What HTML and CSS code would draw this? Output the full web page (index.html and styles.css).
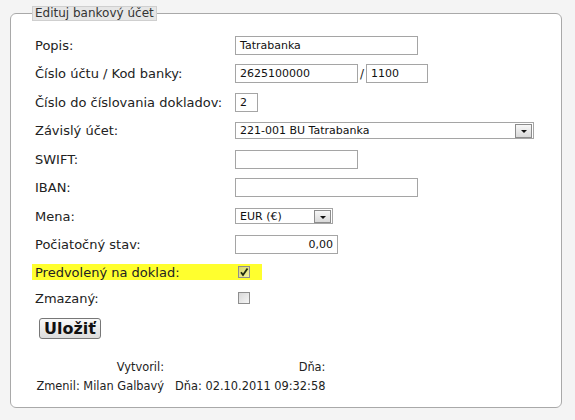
FILE: index.html
```html
<!DOCTYPE html>
<html lang="sk">
<head>
  <meta charset="UTF-8" />
  <title>Edituj bankový účet</title>
  <link rel="stylesheet" href="styles.css">
</head>
<body>

  <fieldset class="box">
    <legend>Edituj bankový účet</legend>

    <div class="row">
      <label>Popis:</label>
      <span class="input w183">Tatrabanka</span>
    </div>

    <div class="row">
      <label>Číslo účtu / Kod banky:</label>
      <span class="input w123">2625100000</span>
      <span class="slash">/</span>
      <span class="input w62">1100</span>
    </div>

    <div class="row">
      <label>Číslo do číslovania dokladov:</label>
      <span class="input w23">2</span>
    </div>

    <div class="row">
      <label>Závislý účet:</label>
      <span class="select w299"><span class="val">221-001 BU Tatrabanka</span><span class="arrow"></span></span>
    </div>

    <div class="row">
      <label>SWIFT:</label>
      <span class="input w123"></span>
    </div>

    <div class="row">
      <label>IBAN:</label>
      <span class="input w183"></span>
    </div>

    <div class="row">
      <label>Mena:</label>
      <span class="select w98 small"><span class="val">EUR (€)</span><span class="arrow"></span></span>
    </div>

    <div class="row">
      <label>Počiatočný stav:</label>
      <span class="input w103 num">0,00</span>
    </div>

    <div class="row check-row">
      <div class="mark">
        <label>Predvolený na doklad:</label>
        <span class="check on">
          <svg width="10" height="10" viewBox="0 0 10 10"><path d="M2 5.2 L4 8 L8.5 1.5" fill="none" stroke="#1e2a10" stroke-width="1.8"/></svg>
        </span>
      </div>
    </div>

    <div class="row check-row">
      <label>Zmazaný:</label>
      <span class="check"></span>
    </div>

    <button class="save">Uložiť</button>

    <div class="audit">
      <span>Vytvoril:</span>
      <span>Dňa:</span>
      <span>Zmenil: Milan Galbavý</span>
      <span>Dňa: 02.10.2011 09:32:58</span>
    </div>
  </fieldset>

</body>
</html>
```

FILE: styles.css
```css
body {
  margin: 6px 8px 8px;
  background: #f4f4f4;
  font-family: 'DejaVu Sans', Verdana, sans-serif;
  font-size: 13px;
  color: #222;
}
.box {
  margin: 0 5px 0 2px;
  padding: 10px 24px 14px 24px;
  border: 1px solid #a9a9a9;
  border-radius: 6px;
  background: #fff;
}
.box legend {
  margin-left: -3px;
  padding: 0 2px;
  font-size: 12px;
  line-height: 13px;
  color: #333;
  background: #e6e6e6;
  border: 1px solid #cfcfcf;
}
.row {
  display: flex;
  align-items: center;
  height: 28.5px;
}
.row label {
  width: 200px;
  flex: none;
}
.check-row {
  height: 26px;
}
.input,
.select {
  box-sizing: border-box;
  display: flex;
  align-items: center;
  height: 19px;
  padding: 0 4px;
  border: 1px solid #a5a5a5;
  font-size: 11px;
  color: #111;
  background: #fff;
}
.num {
  justify-content: flex-end;
}
.slash {
  width: 8px;
  text-align: center;
  font-size: 12px;
}
.w23 { width: 23px; }
.w62 { width: 62px; }
.w103 { width: 103px; }
.w123 { width: 123px; }
.w183 { width: 183px; }
.w299 { width: 299px; }
.w98 { width: 98px; }
.select {
  height: 17px;
  padding-right: 0;
}
.select.small {
  height: 16px;
}
.select .val {
  flex: 1;
}
.select .arrow {
  box-sizing: border-box;
  width: 17px;
  height: 14px;
  margin: 0 1px;
  border: 1px solid #8c8c8c;
  background: linear-gradient(#f7f7f7, #d9d9d9);
  display: flex;
  align-items: center;
  justify-content: center;
}
.select.small .arrow {
  height: 13px;
}
.select .arrow::after {
  content: "";
  margin-top: 2px;
  border-left: 3px solid transparent;
  border-right: 3px solid transparent;
  border-top: 3px solid #111;
}
.mark {
  display: flex;
  align-items: center;
  width: 227px;
  height: 16px;
  margin-left: -3px;
  padding-left: 3px;
  background: #ffff2e;
}
.check {
  box-sizing: border-box;
  width: 12px;
  height: 12px;
  margin-left: 3px;
  border: 1px solid #8e8e8e;
  background: linear-gradient(135deg, #d8d8d8, #f6f6f6);
  display: flex;
  align-items: center;
  justify-content: center;
}
.check.on {
  background: linear-gradient(135deg, #d6d66a, #f2f2a0);
}
.save {
  display: block;
  margin: 7px 0 0 4px;
  height: 21px;
  padding: 0 4px;
  font-family: 'DejaVu Sans', Verdana, sans-serif;
  font-size: 16px;
  font-weight: bold;
  line-height: 17px;
  color: #111;
  border: 1px solid #777;
  border-radius: 3px;
  background: linear-gradient(#fafafa, #dcdcdc);
}
.audit {
  display: grid;
  grid-template-columns: 128px auto;
  justify-content: start;
  justify-items: end;
  column-gap: 11px;
  row-gap: 6px;
  margin-top: 22px;
  padding-left: 1px;
  font-size: 11.4px;
  line-height: 13px;
  color: #222;
}
```
